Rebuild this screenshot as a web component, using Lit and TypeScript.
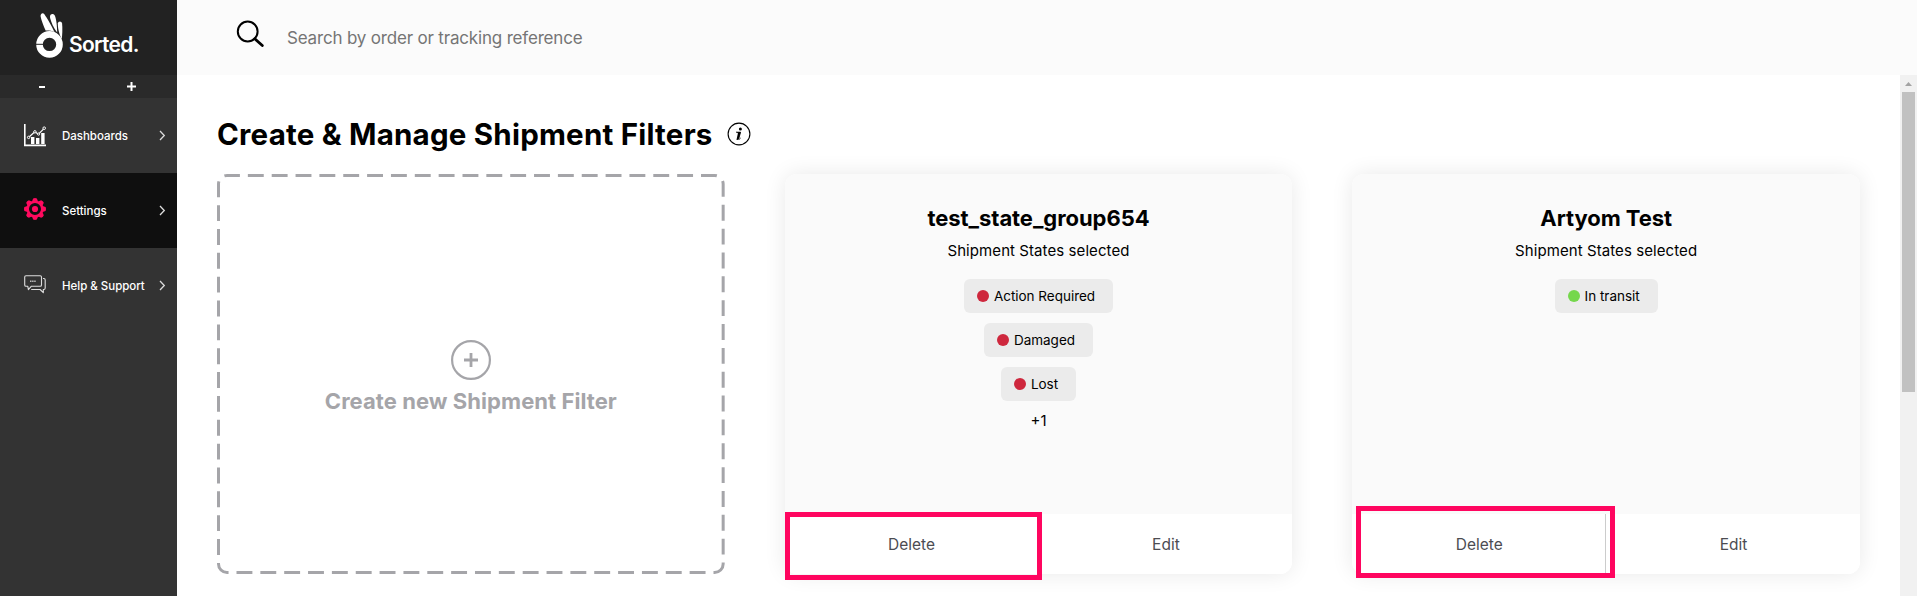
import { LitElement, html, css, svg } from "lit";
import { customElement, property } from "lit/decorators.js";
import { classMap } from "lit/directives/class-map.js";

type State = { label: string; tone: "red" | "green" };

@customElement("side-nav")
class SideNav extends LitElement {
  static styles = css`
    :host { display: flex; flex-direction: column; width: 177px; background: #333; color: #fff; }
    .brand { height: 75px; background: #222; display: flex; box-sizing: border-box; padding: 12px 0 0 35px; }
    .brand svg { flex: none; width: 29px; height: 47px; }
    .word { font-size: 21px; font-weight: 600; letter-spacing: -0.7px; line-height: 26px; margin: 20px 0 0 5px; color: #fff; }
    .zoom { height: 23px; background: #2a2a2a; display: flex; align-items: center; justify-content: space-between; padding: 0 41px 0 39px; }
    .zoom svg { display: block; }
    .item { height: 75px; display: flex; align-items: center; box-sizing: border-box; padding: 0 11px 0 24px; }
    .item.active { background: #0f0f0f; }
    .item svg { flex: none; display: block; }
    .item .gear { margin-top: -3px; }
    .item .chat { margin-top: -3px; }
    .label { flex: 1; margin-left: 16px; font-size: 11.5px; font-weight: 500; letter-spacing: -0.02px; line-height: 16px; white-space: nowrap; }
  `;
  icons = {
    chart: html`<svg width="22" height="23" viewBox="0 0 22 23"><path d="M.8 0v21.4H22" fill="none" stroke="#fff" stroke-width="1.6"/><path d="M7 13h3.400v7H7zM12 14h3.400v6H12zM17.200 9h3.400v11h-3.400z" fill="#fff"/><path d="M4.500 13.500 10.800 7.800l3.600 2.400L20 4.600" fill="none" stroke="#fff" stroke-width="1.200"/><g fill="#333" stroke="#fff"><circle cx="4.600" cy="13.400" r="1.200"/><circle cx="10.900" cy="7.800" r="1.200"/><circle cx="14.600" cy="10.100" r="1.100"/><circle cx="20.200" cy="4.200" r="1.300"/></g></svg>`,
    gear: html`<svg class="gear" width="22" height="22" viewBox="-11 -11 22 22"><g fill="#ff0a5f">${[0, 45, 90, 135, 180, 225, 270, 315].map(
      (a) => svg`<path transform="rotate(${a})" d="M-3-7.500-1.900-10.600Q0-11.400 1.900-10.600L3-7.500z"/>`,
    )}</g><circle r="7.300" fill="none" stroke="#ff0a5f" stroke-width="2.600"/><circle r="3.100" fill="#ff0a5f"/></svg>`,
    chat: html`<svg class="chat" width="22" height="19" viewBox="0 0 22 19"><g fill="none" stroke="#ddd" stroke-width="1.1" stroke-linejoin="round"><path d="M2 .7h14.2q1.3 0 1.3 1.3v8q0 1.3-1.3 1.3H7.200L4.400 14.600 3.800 11.300H2Q.7 11.300.7 10V2Q.7.700 2 .7z"/><path d="M19 3.500h.8q1.400 0 1.400 1.400v8.200q0 1.400-1.400 1.400h-.5v3.200l-3.200-3.200H7.200"/></g><path d="M6 6.300h6" stroke="#bbb" stroke-width="1.400" stroke-dasharray="1.500 .6"/></svg>`,
  };
  render() {
    const items: [keyof SideNav["icons"], string, boolean][] = [
      ["chart", "Dashboards", false],
      ["gear", "Settings", true],
      ["chat", "Help & Support", false],
    ];
    return html`
      <div class="brand">
        <svg viewBox="0 0 29 47">
          <g fill="#fff">
            <path d="M5.600 4.500C5.200 2 7.600.2 9.400 2.200 12 6 17 14.500 19.600 20.200 16.500 18.600 12.600 18.400 10.600 18.600 8.600 14 6.400 8.500 5.600 4.500z"/>
            <path d="M15 5.200c-.4-3.600 3.600-4.300 4.900-1.500C21.600 8 22 15 22.200 20.500 18.800 16.200 15.700 9.500 15 5.200z"/>
            <path d="M22.800 11.500c.3-2.700 3.900-2.700 4.300 0 .5 4.500.2 11-.3 15.500C24.600 23.500 22.800 17 22.800 11.500z"/>
          </g>
          <circle cx="14.500" cy="32.400" r="10" fill="none" stroke="#fff" stroke-width="6.600"/>
          <path d="M0 32.300H8" stroke="#222" stroke-width="1"/>
        </svg>
        <span class="word">Sorted.</span>
      </div>
      <div class="zoom">
        <svg width="6" height="2"><path d="M0 1h6" stroke="#fff" stroke-width="2"/></svg>
        <svg width="9" height="9"><path d="M0 4.500h9M4.500 0v9" stroke="#fff" stroke-width="2"/></svg>
      </div>
      ${items.map(
        ([icon, label, active]) => html`<div class=${classMap({ item: true, active })}>
          ${this.icons[icon]}<span class="label">${label}</span>
          <svg width="7" height="11" viewBox="0 0 7 11"><path d="M1 1 5.300 5.500 1 10" fill="none" stroke="#ddd" stroke-width="1.300"/></svg>
        </div>`,
      )}
    `;
  }
}

@customElement("filter-card")
class FilterCard extends LitElement {
  @property() name = "";
  @property({ attribute: false }) states: State[] = [];
  @property() more = "";
  @property() mark: "flush" | "offset" = "flush";
  static styles = css`
    :host { display: flex; flex-direction: column; height: 400px; border-radius: 12px; box-shadow: 0 0 22px rgba(0, 0, 0, 0.09); }
    .body { flex: 1; display: flex; flex-direction: column; align-items: center; background: #fafafa; border-radius: 12px 12px 0 0; padding-top: 30px; color: #000; }
    .name { font-size: 22px; font-weight: 700; line-height: 28px; letter-spacing: -0.06px; }
    .sub { font-size: 15px; line-height: 20px; letter-spacing: 0.08px; margin: 9px 0 18px; }
    .chips { display: flex; flex-direction: column; align-items: center; gap: 10px; }
    .chip { height: 34px; box-sizing: border-box; border-radius: 6px; background: #ebebeb; display: flex; align-items: center; gap: 5px; padding: 0 18px 0 13px; font-size: 13.5px; letter-spacing: -0.02px; }
    .dot { width: 12px; height: 12px; border-radius: 50%; }
    .red { background: #ce273d; }
    .green { background: #75d74c; }
    .more { font-size: 15px; line-height: 20px; }
    .foot { display: grid; grid-template-columns: 1fr 1fr; height: 60px; background: #fff; border-radius: 0 0 12px 12px; color: #4c4c52; font-size: 15.5px; }
    .action { display: flex; align-items: center; justify-content: center; position: relative; padding-left: 1px; }
    .action:first-child { border-right: 1px solid #ccc; }
    .mark { position: absolute; box-sizing: border-box; border: 5px solid #ff055f; }
    .flush { left: 0; top: -2px; width: 257px; height: 68px; }
    .offset { left: 4px; top: -8px; width: 259px; height: 72px; }
  `;
  render() {
    return html`
      <div class="body">
        <div class="name">${this.name}</div>
        <div class="sub">Shipment States selected</div>
        <div class="chips">
          ${this.states.map((s) => html`<div class="chip"><span class="dot ${s.tone}"></span>${s.label}</div>`)}
          ${this.more ? html`<div class="more">${this.more}</div>` : ""}
        </div>
      </div>
      <div class="foot">
        <div class="action">Delete<span class="mark ${this.mark}"></span></div>
        <div class="action">Edit</div>
      </div>
    `;
  }
}

@customElement("app-root")
class AppRoot extends LitElement {
  static styles = css`
    :host { display: flex; height: 596px; overflow: hidden; background: #fff; font-family: Inter, "Liberation Sans", sans-serif; }
    .main { flex: 1; min-width: 0; display: flex; flex-direction: column; }
    .search { height: 75px; flex: none; background: #fbfbfb; display: flex; align-items: flex-start; box-sizing: border-box; padding: 20px 0 0 59px; }
    .search span { font-size: 17px; letter-spacing: -0.18px; line-height: 24px; margin: 6px 0 0 22px; color: #757575; }
    .view { flex: 1; min-height: 0; display: flex; }
    .content { flex: 1; min-width: 0; padding: 39px 40px 0; }
    .title { display: flex; align-items: center; gap: 14px; margin-bottom: 20px; }
    h1 { margin: 0; font-size: 29.5px; line-height: 40px; font-weight: 700; letter-spacing: 0.22px; color: #000; white-space: nowrap; }
    .title svg { display: block; }
    .cards { display: grid; grid-template-columns: repeat(3, 1fr); gap: 60px; }
    .create { display: grid; height: 400px; color: #a5a5a9; }
    .create > * { grid-area: 1 / 1; }
    .outline { width: 100%; height: 400px; display: block; }
    .outline rect { width: calc(100% - 3px); height: calc(100% - 3px); }
    .prompt { display: flex; flex-direction: column; align-items: center; gap: 7px; padding-top: 166px; font-size: 22px; font-weight: 700; line-height: 28px; letter-spacing: 0.06px; }
    .scroll { width: 17px; background: #f1f1f1; display: flex; flex-direction: column; align-items: center; }
    .arrow { height: 17px; display: flex; align-items: center; }
    .thumb { width: 13px; height: 300px; background: #c1c1c1; }
  `;
  render() {
    const red = (label: string): State => ({ label, tone: "red" });
    return html`
      <side-nav></side-nav>
      <div class="main">
        <div class="search">
          <svg width="29" height="29" viewBox="0 0 29 29"><circle cx="11.700" cy="11.500" r="9.900" fill="none" stroke="#000" stroke-width="2"/><path d="M18.800 18.800 26.300 25.500" stroke="#000" stroke-width="2.800" stroke-linecap="round"/></svg>
          <span>Search by order or tracking reference</span>
        </div>
        <div class="view">
          <div class="content">
            <div class="title">
              <h1>Create &amp; Manage Shipment Filters</h1>
              <svg width="24" height="24" viewBox="0 0 24 24"><circle cx="12" cy="12" r="10.900" fill="none" stroke="#000" stroke-width="1.100"/><circle cx="13.400" cy="6.900" r="1.500"/><path d="M9.300 10.200h4.300l-1.900 6.600q-.2.900.5.500l1.500-1.300M9.300 10.200l1.800.6" fill="none" stroke="#000" stroke-width=".8"/><path d="M11.200 10h2.500l-2 7.300q-1.500 1.400-2.200.4z"/></svg>
            </div>
            <div class="cards">
              <div class="create">
                <svg class="outline"><rect x="1.500" y="1.500" rx="8.500" fill="none" stroke="#a5a5a9" stroke-width="3" stroke-dasharray="15.900 7.950" stroke-dashoffset="3"/></svg>
                <div class="prompt">
                  <svg width="40" height="40" viewBox="0 0 40 40"><circle cx="20" cy="20" r="18.900" fill="none" stroke="#a5a5a9" stroke-width="2.200"/><path d="M13 20h14M20 13v14" stroke="#a5a5a9" stroke-width="2.800"/></svg>
                  <span>Create new Shipment Filter</span>
                </div>
              </div>
              <filter-card name="test_state_group654" more="+1" mark="flush" .states=${[red("Action Required"), red("Damaged"), red("Lost")]}></filter-card>
              <filter-card name="Artyom Test" mark="offset" .states=${[{ label: "In transit", tone: "green" }]}></filter-card>
            </div>
          </div>
          <div class="scroll">
            <div class="arrow"><svg width="7" height="4"><path d="M0 4 3.500 0 7 4z" fill="#a3a3a3"/></svg></div>
            <div class="thumb"></div>
          </div>
        </div>
      </div>
    `;
  }
}
